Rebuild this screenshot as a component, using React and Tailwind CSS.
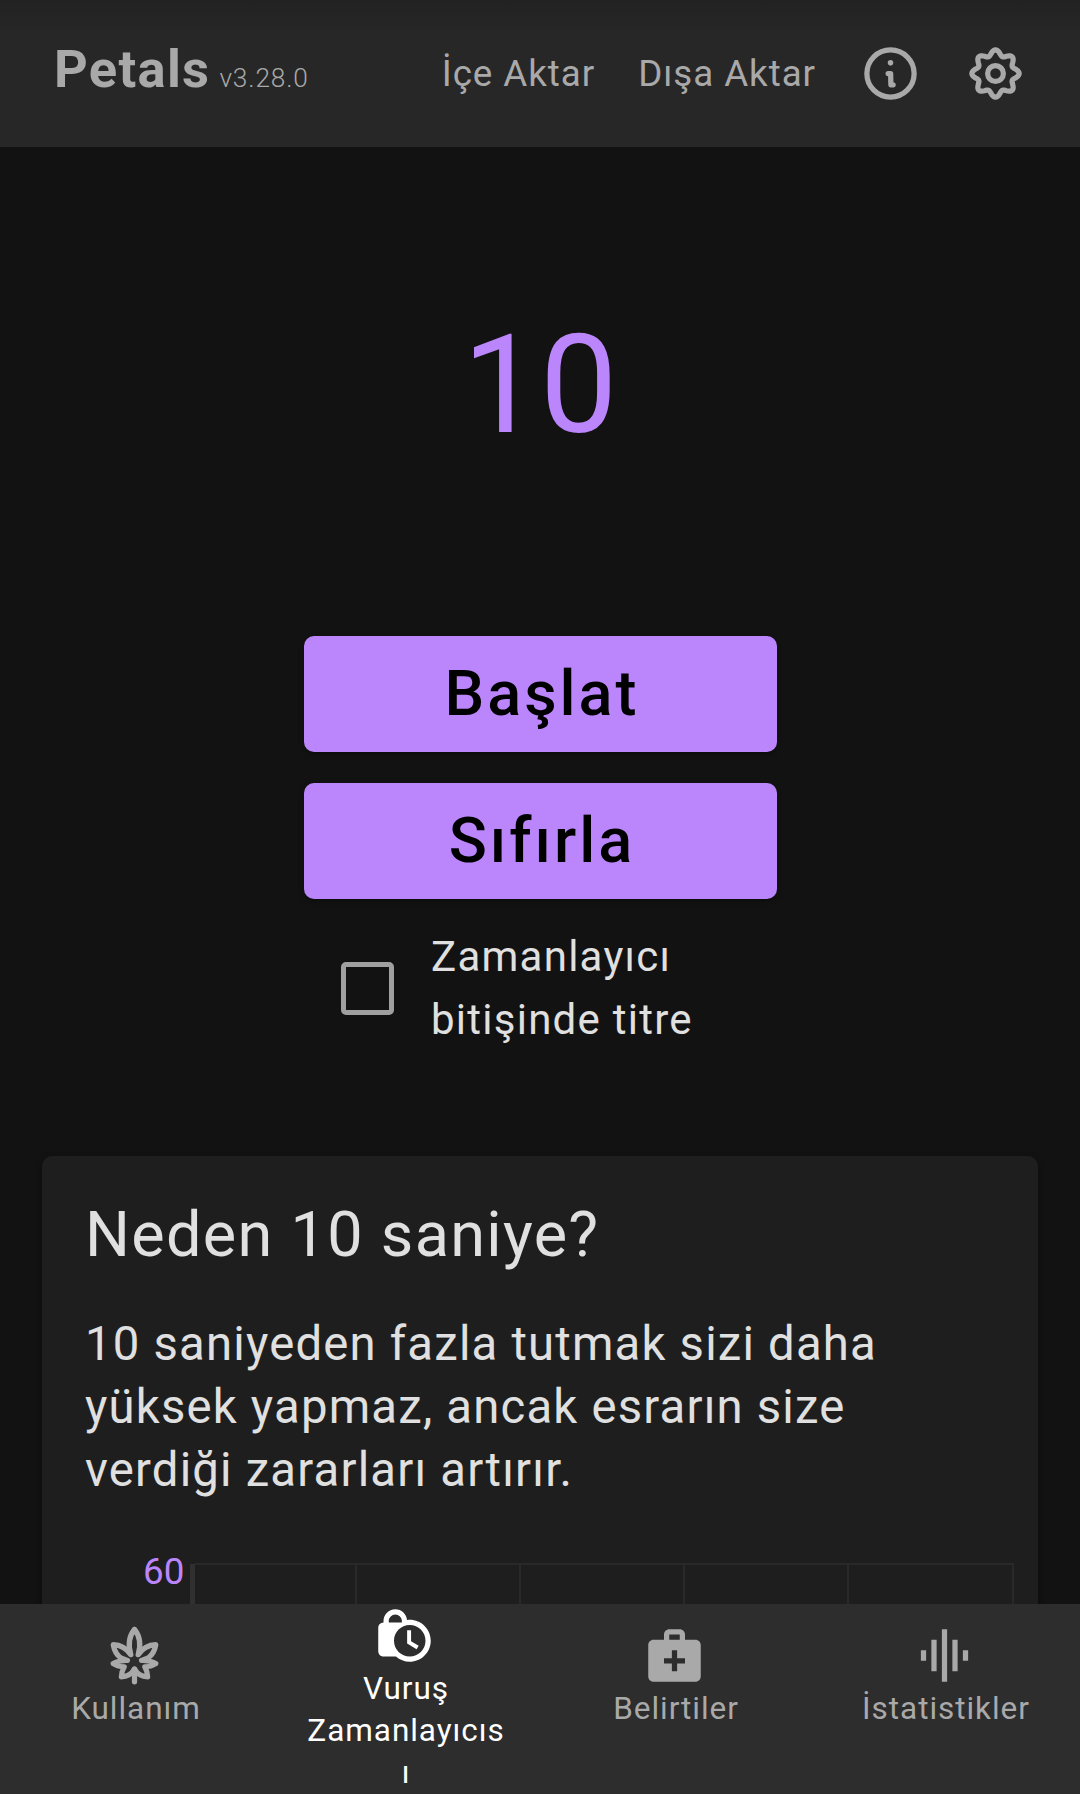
import { MdLockClock, MdMedicalServices, MdGraphicEq } from "react-icons/md";

const GEAR_PATH =
  Array.from({ length: 144 }, (_, i) => {
    const a = (i / 144) * Math.PI * 2;
    const r = 7.95 + 1.05 * Math.cos(8 * a);
    return `${i ? "L" : "M"}${(12 + r * Math.sin(a)).toFixed(3)} ${(12 - r * Math.cos(a)).toFixed(3)}`;
  }).join("") + "Z";

function StrokeIcon({ children }) {
  return (
    <svg
      viewBox="0 0 24 24"
      className="size-[63px] shrink-0"
      fill="none"
      stroke="currentColor"
      strokeWidth="2"
      strokeLinecap="round"
      strokeLinejoin="round"
    >
      {children}
    </svg>
  );
}

function InfoIcon() {
  return (
    <StrokeIcon>
      <circle cx="12" cy="12" r="9" />
      <circle cx="12" cy="7.95" r="1.05" fill="currentColor" stroke="none" />
      <path d="M11.1 12H12.05L12.15 16.3H13" />
    </StrokeIcon>
  );
}

function GearIcon() {
  return (
    <StrokeIcon>
      <path d={GEAR_PATH} />
      <circle cx="12" cy="12" r="3" />
    </StrokeIcon>
  );
}

const LEAF_HALF =
  "M12 2.1C10.1 4.4 9.5 8 10.6 11.7C9 9.4 6.8 8 3.9 7.9C4.3 10.2 5.3 11.9 6.8 12.9L9.3 13.9C7.2 13.8 5.5 14.2 3.9 15.1C5.1 15.9 6.4 16.3 8.1 16.3C7.4 17.5 7 18.8 7 20.1C9 20.1 10.9 19.1 12 17.2";

function LeafIcon() {
  return (
    <StrokeIcon>
      <path d={LEAF_HALF} />
      <path d={LEAF_HALF} transform="translate(24 0) scale(-1 1)" />
      <path d="M12 17.2V22" />
    </StrokeIcon>
  );
}

function Header() {
  return (
    <header className="flex h-[147px] shrink-0 items-center justify-between bg-[#272727] bg-linear-to-b from-[#222222] to-[#272727] to-25% pr-[53px] pl-[54px] text-[#a9a9a9]">
      <div className="flex items-baseline leading-[64px]">
        <h1 className="text-[52.5px] font-bold tracking-[1.3px]">Petals</h1>
        <span className="ml-[9px] text-[26.25px] font-light tracking-[0.85px]">v3.28.0</span>
      </div>
      <div className="flex items-center gap-[42px] text-[36.75px] leading-[52px] tracking-[0.95px]">
        <button className="mr-px">İçe Aktar</button>
        <button className="mr-px">Dışa Aktar</button>
        <InfoIcon />
        <GearIcon />
      </div>
    </header>
  );
}

function ActionButton({ children }) {
  return (
    <button className="h-[116px] w-[473px] rounded-[10px] bg-[#bb86fc] pl-1 text-[63px] leading-[84px] font-medium tracking-[3px] text-black shadow-[0_2px_5px_rgba(0,0,0,0.35)]">
      {children}
    </button>
  );
}

function Chart() {
  return (
    <div className="mt-[61px] flex">
      <span className="-mt-[12px] ml-[58px] w-[46px] shrink-0 text-[36.75px] leading-[42px] text-[#bb86fc]">60</span>
      <div className="mt-px ml-[1px] h-[240px] w-[5px] shrink-0 bg-[#303030]" />
      <div className="grid h-[240px] shrink-0 grid-cols-[162px_164px_164px_164px_165px] border-t-2 border-[#292929]">
        {[0, 1, 2, 3, 4].map((i) => (
          <div key={i} className="border-r-2 border-[#292929]" />
        ))}
      </div>
    </div>
  );
}

function NavItem({ icon, lines, active }) {
  return (
    <button
      className={
        active
          ? "flex flex-1 flex-col items-center text-white"
          : "flex flex-1 flex-col items-center pt-5 text-[#a9a9a9]"
      }
    >
      <span className="mr-px mb-px">{icon}</span>
      {lines.map((l) => (
        <span key={l} className="pl-[2px] text-[31.5px] leading-[42px] tracking-[0.95px] whitespace-nowrap">
          {l}
        </span>
      ))}
    </button>
  );
}

export default function App() {
  return (
    <div className="flex h-[1794px] w-[1080px] flex-col overflow-hidden bg-[#121212] font-[Roboto,sans-serif]">
      <Header />
      <main className="flex min-h-0 flex-1 flex-col items-center overflow-hidden text-[#e0e0e0]">
        <div className="mt-[158px] h-[160px] shrink-0 text-[137.8px] leading-[160px] text-[#bb86fc]">10</div>
        <div className="mt-[171px] flex shrink-0 flex-col gap-[31px]">
          <ActionButton>Başlat</ActionButton>
          <ActionButton>Sıfırla</ActionButton>
        </div>
        <label className="mt-[26px] flex w-[398px] shrink-0 items-center gap-[37px]">
          <span className="size-[53px] shrink-0 rounded-[5px] border-[5px] border-[#a0a0a0]" />
          <span className="text-[42px] leading-[63px] tracking-[1.25px] whitespace-nowrap">
            Zamanlayıcı
            <br />
            bitişinde titre
          </span>
        </label>
        <section className="mt-[105px] w-[996px] shrink-0 rounded-[10px] bg-[#1e1e1e] px-[43px] pt-[37px] shadow-[0_2px_6px_rgba(0,0,0,0.4)]">
          <h2 className="text-[63px] leading-[84px] tracking-[1.3px]">Neden 10 saniye?</h2>
          <p className="mt-9 text-[47.25px] leading-[63px] tracking-[1.2px] whitespace-nowrap">
            10 saniyeden fazla tutmak sizi daha
            <br />
            yüksek yapmaz, ancak esrarın size
            <br />
            verdiği zararları artırır.
          </p>
          <Chart />
        </section>
      </main>
      <nav className="z-10 flex h-[190px] shrink-0 bg-[#2d2d2d]">
        <NavItem icon={<LeafIcon />} lines={["Kullanım"]} />
        <NavItem active icon={<MdLockClock className="size-[63px]" />} lines={["Vuruş", "Zamanlayıcıs", "ı"]} />
        <NavItem icon={<MdMedicalServices className="size-[63px]" />} lines={["Belirtiler"]} />
        <NavItem icon={<MdGraphicEq className="size-[63px]" />} lines={["İstatistikler"]} />
      </nav>
    </div>
  );
}
